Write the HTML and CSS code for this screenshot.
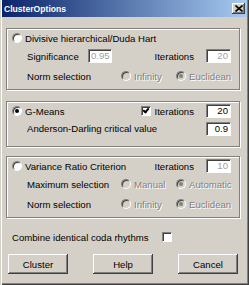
FILE: index.html
```html
<!DOCTYPE html>
<html lang="en">
<head>
    <meta charset="UTF-8">
    <title>ClusterOptions</title>
    <link rel="stylesheet" href="styles.css">
</head>
<body>
    <div class="window">
        <div class="titlebar">
            <span class="title">ClusterOptions</span>
            <span class="close">
                <svg width="8" height="7" viewBox="0 0 8 7"><path d="M0.5 0.5 L7.5 6.5 M7.5 0.5 L0.5 6.5" stroke="#000" stroke-width="1.6"/></svg>
            </span>
        </div>
        <div class="content">
            <div class="group">
                <div class="row row-head">
                    <span class="radio"></span>
                    <span class="grow">Divisive hierarchical/Duda Hart</span>
                </div>
                <div class="row row-sub">
                    <span class="label-short">Significance</span>
                    <span class="field off">0.95</span>
                    <span class="grow right">Iterations</span>
                    <span class="field off">20</span>
                </div>
                <div class="row row-sub row-last">
                    <span class="label-long">Norm selection</span>
                    <span class="option off"><span class="radio dis"></span>Infinity</span>
                    <span class="option off"><span class="radio dis on"></span>Euclidean</span>
                </div>
            </div>

            <div class="group group-small">
                <div class="row row-head">
                    <span class="radio on"></span>
                    <span class="grow">G-Means</span>
                    <span class="check on"></span>
                    <span>Iterations</span>
                    <span class="field">20</span>
                </div>
                <div class="row row-sub row-mid">
                    <span class="grow">Anderson-Darling critical value</span>
                    <span class="field">0.9</span>
                </div>
            </div>

            <div class="group">
                <div class="row row-head">
                    <span class="radio"></span>
                    <span class="grow">Variance Ratio Criterion</span>
                    <span>Iterations</span>
                    <span class="field off">10</span>
                </div>
                <div class="row row-sub">
                    <span class="label-long">Maximum selection</span>
                    <span class="option off"><span class="radio dis"></span>Manual</span>
                    <span class="option off"><span class="radio dis on"></span>Automatic</span>
                </div>
                <div class="row row-sub row-last">
                    <span class="label-long">Norm selection</span>
                    <span class="option off"><span class="radio dis"></span>Infinity</span>
                    <span class="option off"><span class="radio dis on"></span>Euclidean</span>
                </div>
            </div>

            <div class="combine">
                <span>Combine identical coda rhythms</span>
                <span class="check"></span>
            </div>

            <div class="buttons">
                <button>Cluster</button>
                <button>Help</button>
                <button>Cancel</button>
            </div>
        </div>
    </div>
</body>
</html>
```

FILE: styles.css
```css
body {
    margin: 0;
    font-family: "Liberation Sans", Arial, sans-serif;
    font-size: 9.6px;
    color: #000;
    background: #d4d0c8;
}
.window {
    width: 249px;
    height: 285px;
    box-sizing: border-box;
    background: #d4d0c8;
    box-shadow: inset 1px 0 #d4d0c8, inset 2px 0 #fff, inset -1px -1px #404040, inset -2px -2px #808080;
}
.titlebar {
    height: 17px;
    margin: 0 2px 0 2px;
    display: flex;
    align-items: center;
    justify-content: space-between;
    padding: 0 2px 0 2px;
    background: linear-gradient(to right, #0a246a, #a6caf0);
}
.title {
    color: #fff;
    font-weight: bold;
    font-size: 8.6px;
}
.close {
    width: 13px;
    height: 11px;
    box-sizing: border-box;
    display: flex;
    align-items: center;
    justify-content: center;
    background: #d4d0c8;
    box-shadow: inset -1px -1px #404040, inset 1px 1px #fff, inset -2px -2px #808080;
}
.content {
    padding: 11px 9px 0 6px;
}
.group {
    height: 62px;
    box-sizing: border-box;
    border: 1px solid #808080;
    box-shadow: 1px 1px 0 #fff, inset 1px 1px 0 #fff;
    padding: 0 8px 2px 5px;
    margin-bottom: 11px;
}
.group-small {
    height: 46px;
    margin-bottom: 9px;
}
.row {
    display: flex;
    align-items: center;
    height: 18px;
}
.row-sub {
    padding-left: 15px;
}
.row-mid {
    height: 17px;
}
.row-last {
    height: 22px;
}
.grow {
    flex: 1;
}
.right {
    text-align: right;
}
.label-short {
    width: 61px;
}
.label-long {
    width: 94px;
}
.option {
    width: 55px;
    display: flex;
    align-items: center;
}
.off {
    color: #808080;
    text-shadow: 1px 1px 0 #fff;
}
.field {
    width: 25px;
    height: 14px;
    box-sizing: border-box;
    margin-left: 12px;
    padding: 0 2px;
    background: #fff;
    border: 1px solid;
    border-color: #808080 #fff #fff #808080;
    box-shadow: inset 1px 1px #404040;
    text-align: right;
    line-height: 12px;
    color: #000;
}
.field.off {
    color: #a0a0a0;
    text-shadow: none;
}
.label-short + .field {
    width: 24px;
    margin-left: 0;
}
.radio {
    width: 10px;
    height: 10px;
    box-sizing: border-box;
    border-radius: 50%;
    background: #fff;
    border: 1px solid;
    border-color: #808080 #fff #fff #808080;
    box-shadow: inset 1px 1px #404040;
    margin-right: 3px;
    position: relative;
    flex: none;
}
.radio.dis {
    background: #d4d0c8;
}
.radio.on::after {
    content: "";
    position: absolute;
    left: 2px;
    top: 2px;
    width: 4px;
    height: 4px;
    border-radius: 50%;
    background: #000;
}
.radio.dis.on::after {
    background: #808080;
}
.check {
    width: 10px;
    height: 10px;
    box-sizing: border-box;
    background: #fff;
    border: 1px solid;
    border-color: #808080 #fff #fff #808080;
    box-shadow: inset 1px 1px #404040;
    margin-right: 4px;
    position: relative;
    flex: none;
}
.check.on::after {
    content: "";
    position: absolute;
    left: 2px;
    top: 0px;
    width: 2px;
    height: 4px;
    border: solid #000;
    border-width: 0 2px 2px 0;
    transform: rotate(40deg);
}
.combine {
    display: flex;
    align-items: center;
    height: 16px;
    padding-left: 6px;
}
.combine .check {
    margin-left: 13px;
}
.buttons {
    display: flex;
    justify-content: space-between;
    margin-top: 9px;
    padding: 0 2px;
}
button {
    width: 60px;
    height: 20px;
    font-family: inherit;
    font-size: 9.6px;
    color: #000;
    background: #d4d0c8;
    border: none;
    box-shadow: inset -1px -1px #404040, inset 1px 1px #fff, inset -2px -2px #808080;
    padding: 0;
}
```
